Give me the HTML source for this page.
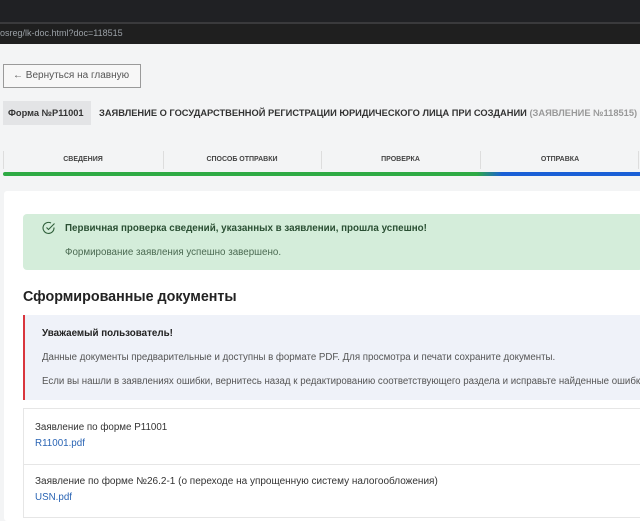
<!DOCTYPE html>
<html><head><meta charset="utf-8"><style>
*{margin:0;padding:0;box-sizing:border-box}
body{width:640px;height:512px;overflow:hidden;background:#f3f4f5;font-family:"Liberation Sans","DejaVu Sans",sans-serif;color:#333;position:relative}
.a{position:absolute;white-space:nowrap}
</style></head><body>
<div class="a" style="left:0;top:0;width:640px;height:22px;background:#202124"></div>
<div class="a" style="left:0;top:22px;width:640px;height:2px;background:#3a3a3c"></div>
<div class="a" style="left:0;top:24px;width:640px;height:20px;background:#1f1f1f"></div>
<div class="a" style="left:0;top:28px;font-size:9px;color:#9aa0a6">osreg/lk-doc.html?doc=118515</div>

<div class="a" style="left:3px;top:64px;width:138px;height:24px;border:1px solid #9a9a9a;background:#f7f7f7;font-size:10px;color:#555;padding:5px 0 0 9px">← Вернуться на главную</div>

<div class="a" style="left:3px;top:101px;width:88px;height:24px;background:#e3e4e6;font-size:9.3px;font-weight:bold;color:#333;padding:7px 0 0 5px">Форма №Р11001</div>
<div class="a" style="left:99px;top:108px;font-size:9.3px;font-weight:bold;color:#333">ЗАЯВЛЕНИЕ О ГОСУДАРСТВЕННОЙ РЕГИСТРАЦИИ ЮРИДИЧЕСКОГО ЛИЦА ПРИ СОЗДАНИИ <span style="color:#999">(ЗАЯВЛЕНИЕ №118515)</span></div>

<div class="a" style="left:3px;top:151px;width:1px;height:18px;background:#ddd"></div>
<div class="a" style="left:163px;top:151px;width:1px;height:18px;background:#ddd"></div>
<div class="a" style="left:321px;top:151px;width:1px;height:18px;background:#ddd"></div>
<div class="a" style="left:480px;top:151px;width:1px;height:18px;background:#ddd"></div>
<div class="a" style="left:638px;top:151px;width:1px;height:18px;background:#ddd"></div>
<div class="a" style="left:3px;top:156px;width:160px;text-align:center;font-size:7px;font-weight:bold;color:#444">СВЕДЕНИЯ</div>
<div class="a" style="left:163px;top:156px;width:158px;text-align:center;font-size:7px;font-weight:bold;color:#444">СПОСОБ ОТПРАВКИ</div>
<div class="a" style="left:321px;top:156px;width:159px;text-align:center;font-size:7px;font-weight:bold;color:#444">ПРОВЕРКА</div>
<div class="a" style="left:480px;top:156px;width:160px;text-align:center;font-size:7px;font-weight:bold;color:#444">ОТПРАВКА</div>
<div class="a" style="left:3px;top:172px;width:640px;height:4px;border-radius:2px;background:linear-gradient(90deg,#2eaa44 0,#2eaa44 74%,#1a5fd6 78%,#1a5fd6 100%)"></div>

<div class="a" style="left:4px;top:191px;width:640px;height:330px;background:#fff;border-radius:3px"></div>
<div class="a" style="left:23px;top:214px;width:620px;height:56px;background:#d4edda;border-radius:4px"></div>
<svg class="a" style="left:42px;top:221px" width="14" height="14" viewBox="0 0 14 14"><path d="M12 6.5A5.5 5.5 0 1 1 9 2" fill="none" stroke="#2f5f3a" stroke-width="1.1"/><path d="M4.5 6.5l2 2 6-6" fill="none" stroke="#2f5f3a" stroke-width="1.1"/></svg>
<div class="a" style="left:65px;top:223px;font-size:9.8px;font-weight:bold;color:#2a4f33">Первичная проверка сведений, указанных в заявлении, прошла успешно!</div>
<div class="a" style="left:65px;top:247px;font-size:9.8px;color:#4b6a52">Формирование заявления успешно завершено.</div>

<div class="a" style="left:23px;top:289px;font-size:14.3px;font-weight:bold;color:#222">Сформированные документы</div>

<div class="a" style="left:23px;top:315px;width:620px;height:85px;background:#eff2f9;border-left:2px solid #d9363e"></div>
<div class="a" style="left:42px;top:328px;font-size:9.8px;font-weight:bold;color:#222">Уважаемый пользователь!</div>
<div class="a" style="left:42px;top:352px;font-size:9.7px;color:#555">Данные документы предварительные и доступны в формате PDF. Для просмотра и печати сохраните документы.</div>
<div class="a" style="left:42px;top:376px;font-size:9.7px;color:#555">Если вы нашли в заявлениях ошибки, вернитесь назад к редактированию соответствующего раздела и исправьте найденные ошибки.</div>

<div class="a" style="left:23px;top:408px;width:620px;height:110px;border:1px solid #e6e6e6"></div>
<div class="a" style="left:23px;top:464px;width:620px;height:1px;background:#e6e6e6"></div>
<div class="a" style="left:35px;top:422px;font-size:9.8px;color:#333">Заявление по форме Р11001</div>
<div class="a" style="left:35px;top:438px;font-size:9.8px;color:#2a64b4">R11001.pdf</div>
<div class="a" style="left:35px;top:476px;font-size:10px;color:#333">Заявление по форме №26.2-1 (о переходе на упрощенную систему налогообложения)</div>
<div class="a" style="left:35px;top:492px;font-size:9.8px;color:#2a64b4">USN.pdf</div>
</body></html>
